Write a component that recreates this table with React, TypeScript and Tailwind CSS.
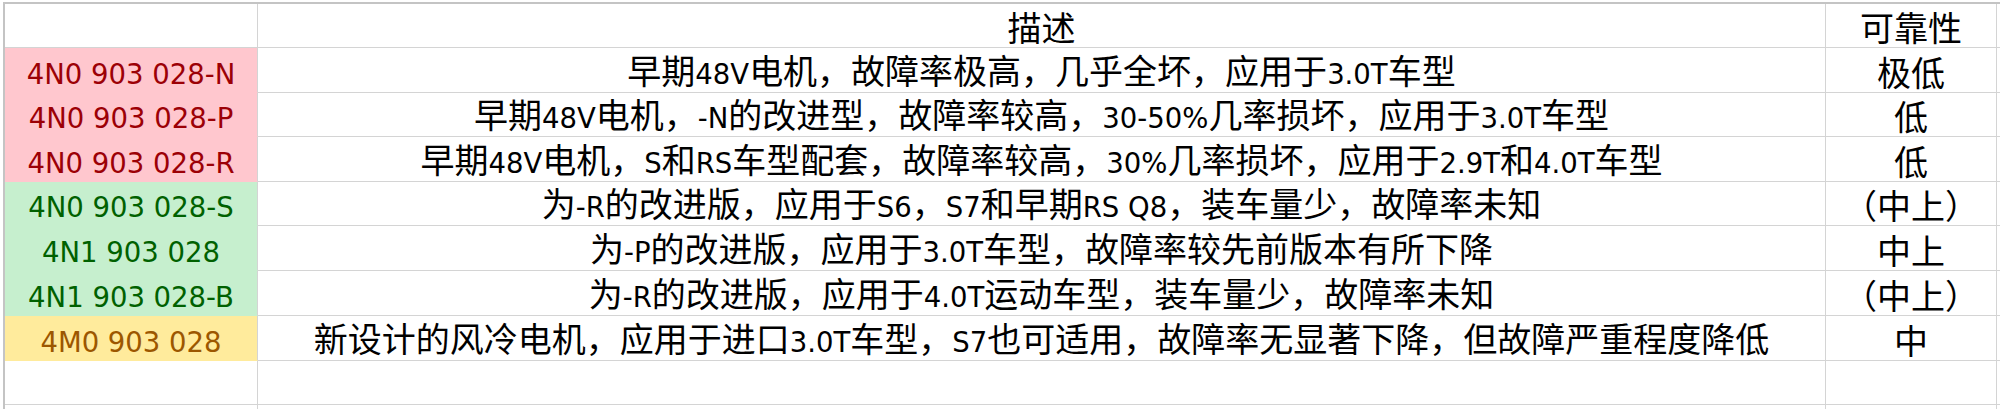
import React from "react";

type Tone = "bad" | "good" | "neutral";

const rows: { code: string; tone: Tone; desc: string; rel: string }[] = [
  { code: "4N0 903 028-N", tone: "bad", desc: "早期48V电机，故障率极高，几乎全坏，应用于3.0T车型", rel: "极低" },
  { code: "4N0 903 028-P", tone: "bad", desc: "早期48V电机，-N的改进型，故障率较高，30-50%几率损坏，应用于3.0T车型", rel: "低" },
  { code: "4N0 903 028-R", tone: "bad", desc: "早期48V电机，S和RS车型配套，故障率较高，30%几率损坏，应用于2.9T和4.0T车型", rel: "低" },
  { code: "4N0 903 028-S", tone: "good", desc: "为-R的改进版，应用于S6，S7和早期RS Q8，装车量少，故障率未知", rel: "（中上）" },
  { code: "4N1 903 028", tone: "good", desc: "为-P的改进版，应用于3.0T车型，故障率较先前版本有所下降", rel: "中上" },
  { code: "4N1 903 028-B", tone: "good", desc: "为-R的改进版，应用于4.0T运动车型，装车量少，故障率未知", rel: "（中上）" },
  { code: "4M0 903 028", tone: "neutral", desc: "新设计的风冷电机，应用于进口3.0T车型，S7也可适用，故障率无显著下降，但故障严重程度降低", rel: "中" },
];

const toneClass: Record<Tone, string> = {
  bad: "bg-[#ffc7ce] text-[#9c0006] border-b-[#ffc7ce]",
  good: "bg-[#c6efce] text-[#006100] border-b-[#c6efce]",
  neutral: "bg-[#ffeb9c] text-[#9c5700] border-b-[#ffeb9c]",
};

function Mixed({ text }: { text: string }) {
  const parts = text.split(/([\x20-\x7E]+)/).filter((p) => p.length > 0);
  return (
    <span className="leading-[36px]">
      {parts.map((p, i) =>
        /^[\x20-\x7E]+$/.test(p) ? (
          <span key={i} className="font-['DejaVu_Sans'] text-[27.5px] whitespace-pre">
            {p}
          </span>
        ) : (
          <span key={i}>{p}</span>
        )
      )}
    </span>
  );
}

const cellBase =
  "flex items-center justify-center pt-[3px] border-r border-b border-[#d4d4d4] whitespace-nowrap";

function EmptyRow() {
  return (
    <div className="flex h-[44px]">
      <div className={`${cellBase} w-[253px] shrink-0`} />
      <div className={`${cellBase} w-[1568px] shrink-0`} />
      <div className={`${cellBase} w-[171px] shrink-0`} />
      <div className={`${cellBase} flex-1 border-r-0`} />
    </div>
  );
}

export default function App() {
  const heights = ["h-[45px]", "h-[44px]", "h-[45px]", "h-[44px]", "h-[45px]", "h-[45px]", "h-[45px]"];
  return (
    <div className="w-[2000px] h-[409px] bg-white overflow-hidden pt-[2px] pl-[3px] font-['Noto_Sans_CJK_SC',sans-serif] text-[34px] leading-[36px] text-black">
      <div className="border-t-2 border-l-2 border-[#c4c4c4] h-full">
        <div className="flex h-[44px]">
          <div className={`${cellBase} w-[253px] shrink-0`} />
          <div className={`${cellBase} w-[1568px] shrink-0`}>
            <span>描述</span>
          </div>
          <div className={`${cellBase} w-[171px] shrink-0`}>
            <span>可靠性</span>
          </div>
          <div className={`${cellBase} flex-1 border-r-0`} />
        </div>
        {rows.map((r, i) => (
          <div key={i} className={`flex ${heights[i]}`}>
            <div className={`${cellBase} w-[253px] shrink-0 ${toneClass[r.tone]}`}>
              <Mixed text={r.code} />
            </div>
            <div className={`${cellBase} w-[1568px] shrink-0`}>
              <Mixed text={r.desc} />
            </div>
            <div className={`${cellBase} w-[171px] shrink-0`}>
              <span>{r.rel}</span>
            </div>
            <div className={`${cellBase} flex-1 border-r-0`} />
          </div>
        ))}
        <EmptyRow />
        <EmptyRow />
      </div>
    </div>
  );
}
